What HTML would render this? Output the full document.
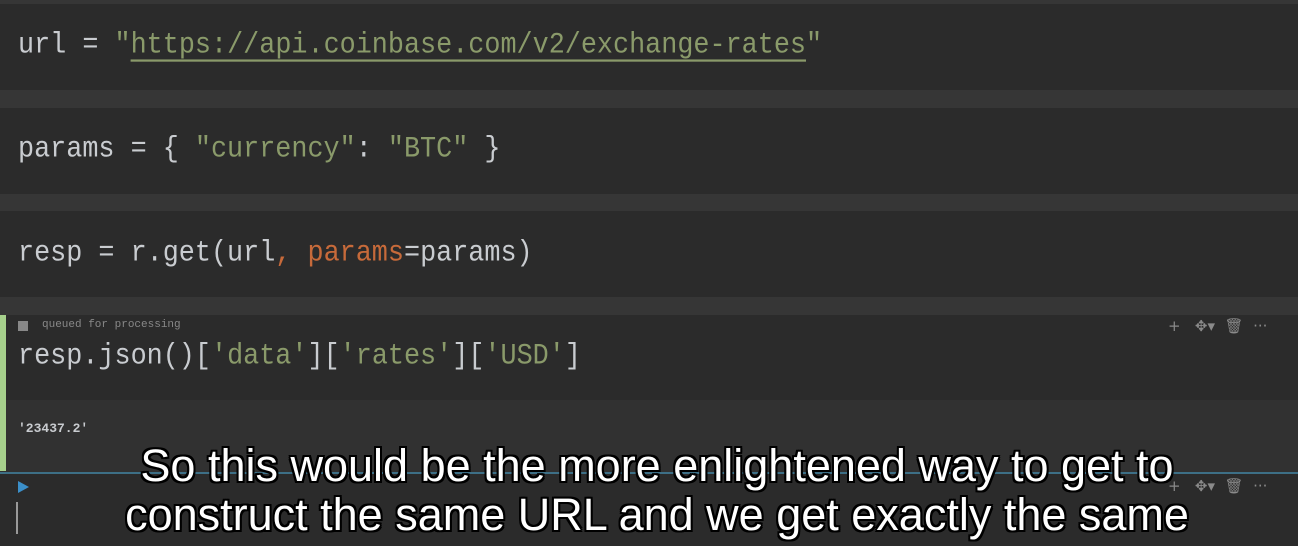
<!DOCTYPE html>
<html><head><style>
body{margin:0;width:1298px;height:546px;background:#2b2b2b;position:relative;overflow:hidden;font-family:"Liberation Mono",monospace}
.sep{position:absolute;left:0;width:1298px;background:#363636}
.code{position:absolute;left:18px;font-size:26.8px;color:#c9ccd0;white-space:pre;line-height:30px;transform:scaleY(1.12);transform-origin:left center}
.s{color:#8a9a6a}.o{color:#c76a3a}
.ic{position:absolute;color:#8a8a8a;font-family:"DejaVu Sans",sans-serif;font-size:15px}
.sub{position:absolute;left:8px;width:1298px;text-align:center;font-family:"Liberation Sans",Arial,sans-serif;font-size:45px;color:#fff;line-height:48px;
text-shadow:-2px -2px 0 #000,2px -2px 0 #000,-2px 2px 0 #000,2px 2px 0 #000,0 2px 0 #000,0 -2px 0 #000,2px 0 0 #000,-2px 0 0 #000}
</style></head><body>
<div class="sep" style="top:0;height:4px"></div>
<div class="sep" style="top:90px;height:18px"></div>
<div class="sep" style="top:194px;height:17px"></div>
<div class="sep" style="top:297px;height:18px"></div>
<div style="position:absolute;left:0;top:400px;width:1298px;height:72px;background:#313131"></div>
<div style="position:absolute;left:0;top:315px;width:6px;height:156px;background:#a6d08c"></div>
<div style="position:absolute;left:0;top:472px;width:1298px;height:2px;background:#3d6f86"></div>
<div class="code" style="top:31px">url = <span class="s">"</span><span class="s" style="text-decoration:underline;text-underline-offset:6px">https://api.coinbase.com/v2/exchange-rates</span><span class="s">"</span></div>
<div class="code" style="top:135px">params = { <span class="s">"currency"</span>: <span class="s">"BTC"</span> }</div>
<div class="code" style="top:239px">resp = r.get(url<span class="o">,</span> <span class="o">params</span>=params)</div>
<div style="position:absolute;left:18px;top:321px;width:10px;height:10px;background:#888"></div>
<div style="position:absolute;left:42px;top:319px;font-size:11px;color:#888">queued for processing</div>
<div class="code" style="top:342px">resp.json()[<span class="s">'data'</span>][<span class="s">'rates'</span>][<span class="s">'USD'</span>]</div>
<div style="position:absolute;left:18px;top:421px;font-size:13px;color:#c9ccd0;font-weight:bold">'23437.2'</div>
<div class="ic" style="left:1168px;top:317px">+&nbsp;&nbsp;&nbsp;✥▾&nbsp;&nbsp;🗑&nbsp;&nbsp;···</div>
<div class="ic" style="left:1168px;top:477px">+&nbsp;&nbsp;&nbsp;✥▾&nbsp;&nbsp;🗑&nbsp;&nbsp;···</div>
<div style="position:absolute;left:18px;top:481px;width:0;height:0;border-left:11px solid #3b8fc9;border-top:6px solid transparent;border-bottom:6px solid transparent"></div>
<div style="position:absolute;left:16px;top:502px;width:2px;height:32px;background:#999"></div>
<div class="sub" style="top:442px">So this would be the more enlightened way to get to</div>
<div class="sub" style="top:491px">construct the same URL and we get exactly the same</div>
</body></html>
